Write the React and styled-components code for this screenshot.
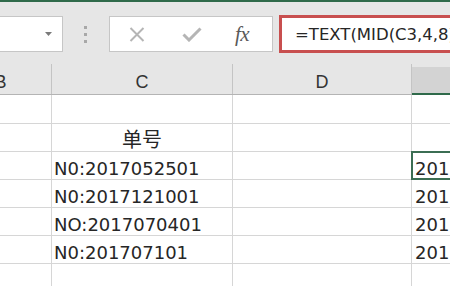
import styled, {createGlobalStyle} from 'styled-components'

const GlobalStyle = createGlobalStyle`
	html, body {
		margin: 0;
		padding: 0;
		background: #fff;
	}
`

const columns = [
	{key: 'B', width: 102},
	{key: 'C', width: 181},
	{key: 'D', width: 179},
	{key: 'E', width: 120, selected: true},
]

const rows = [
	{c: '', e: ''},
	{c: '单号', e: '', title: true},
	{c: 'N0:2017052501', e: '2017-05-25', active: true},
	{c: 'N0:2017121001', e: '2017-12-10'},
	{c: 'NO:2017070401', e: '2017-07-04'},
	{c: 'N0:201707101', e: '2017-07-10'},
	{c: '', e: ''},
]

const App = () => {
	return (
		<Screen>
			<GlobalStyle />
			<TopStrip />

			<FormulaBar>
				<NameBox>
					<svg width="7" height="4" viewBox="0 0 7 4">
						<path d="M0 0h7L3.5 4z" fill="#7a7a7a" />
					</svg>
				</NameBox>

				<Grip>
					<span />
					<span />
					<span />
				</Grip>

				<Buttons>
					<IconSlot $w={18}>
						<svg width="16" height="15" viewBox="0 0 16 15">
							<path d="M1.5 1l13 13M14.5 1l-13 13" stroke="#b5b5b5" strokeWidth="2" fill="none" />
						</svg>
					</IconSlot>
					<IconSlot $w={20} $ml={36}>
						<svg width="20" height="15" viewBox="0 0 20 15">
							<path d="M1.5 7.5l5.5 5.5L18.5 1.5" stroke="#b5b5b5" strokeWidth="3" fill="none" />
						</svg>
					</IconSlot>
					<Fx>fx</Fx>
				</Buttons>

				<FormulaInput>=TEXT(MID(C3,4,8),"0000-00-00")</FormulaInput>
			</FormulaBar>

			<Sheet>
				<HeaderRow>
					{columns.map(col => (
						<HeaderCell key={col.key} $w={col.width} $selected={col.selected}>
							{col.selected ? '' : col.key}
						</HeaderCell>
					))}
				</HeaderRow>

				{rows.map((row, i) => (
					<Row key={i} $first={i === 0}>
						<Cell $w={102} />
						<Cell $w={181} $center={row.title}>
							{row.title ? <Title>{row.c}</Title> : row.c}
						</Cell>
						<Cell $w={179} />
						<Cell $w={120} $pad={3} $active={row.active}>{row.e}</Cell>
					</Row>
				))}
			</Sheet>
		</Screen>
	)
}

export default App

const Screen = styled.div`
	width: 450px;
	height: 286px;
	overflow: hidden;
	background: #e6e6e6;
	display: flex;
	flex-direction: column;
`

const TopStrip = styled.div`
	height: 2px;
	background: #2f6a4a;
	flex-shrink: 0;
`

const FormulaBar = styled.div`
	display: flex;
	align-items: center;
	height: 38px;
	margin-top: 13px;
	flex-shrink: 0;
`

const NameBox = styled.div`
	width: 63px;
	height: 36px;
	box-sizing: border-box;
	background: #fff;
	border: 1px solid #c6c6c6;
	border-left: none;
	display: flex;
	align-items: center;
	justify-content: flex-end;
	padding-right: 10px;
`

const Grip = styled.div`
	margin-left: 21px;
	width: 3px;
	display: flex;
	flex-direction: column;
	gap: 4px;

	span{
		display: block;
		width: 3px;
		height: 3px;
		background: #a8a8a8;
	}
`

const Buttons = styled.div`
	margin-left: 22px;
	width: 164px;
	height: 36px;
	box-sizing: border-box;
	background: #fff;
	border: 1px solid #c6c6c6;
	display: flex;
	align-items: center;
	padding-left: 18px;
`

const IconSlot = styled.div`
	width: ${p => p.$w}px;
	margin-left: ${p => p.$ml || 0}px;
	display: flex;
	justify-content: center;
	align-items: center;
`

const Fx = styled.span`
	margin-left: 33px;
	font-family: "Liberation Serif", "DejaVu Serif", serif;
	font-style: italic;
	font-size: 21px;
	color: #5a5a5a;
	letter-spacing: -0.5px;
	line-height: 1;
`

const FormulaInput = styled.div`
	margin-left: 6px;
	flex: 1;
	min-width: 0;
	height: 38px;
	box-sizing: border-box;
	background: #fff;
	border: 3px solid #c84f4f;
	border-right: none;
	padding-left: 13px;
	display: flex;
	align-items: center;
	white-space: nowrap;
	overflow: hidden;
	font-family: "DejaVu Sans", sans-serif;
	font-size: 16.5px;
	color: #262626;
`

const Sheet = styled.div`
	margin-top: 11px;
	margin-left: -50px;
	background: #fff;
	flex: 1;
`

const HeaderRow = styled.div`
	display: flex;
	height: 31px;
	background: #e6e6e6;
	border-bottom: 1px solid #b4b4b4;
	box-sizing: border-box;
`

const HeaderCell = styled.div`
	flex: 0 0 ${p => p.$w}px;
	box-sizing: border-box;
	border-right: 1px solid #c4c4c4;
	display: flex;
	align-items: flex-end;
	justify-content: center;
	padding-bottom: 3px;
	margin-top: ${p => p.$selected ? '3px' : '0'};
	background: ${p => p.$selected ? '#d3d3d3' : 'transparent'};
	border-bottom: ${p => p.$selected ? '2px solid #2f6a4a' : 'none'};
	margin-bottom: ${p => p.$selected ? '-1px' : '0'};
	font-family: "Liberation Sans", Arial, sans-serif;
	font-size: 18px;
	line-height: 1;
	color: #333;
`

const Row = styled.div`
	display: flex;
	height: ${p => p.$first ? 29 : 28}px;
	border-bottom: 1px solid #d6d6d6;
	box-sizing: border-box;
`

const Cell = styled.div`
	position: relative;
	flex: 0 0 ${p => p.$w}px;
	box-sizing: border-box;
	border-right: 1px solid #d6d6d6;
	display: flex;
	align-items: flex-end;
	justify-content: ${p => p.$center ? 'center' : 'flex-start'};
	padding: 0 0 1px ${p => p.$pad || 2}px;
	white-space: nowrap;
	overflow: visible;
	font-family: "DejaVu Sans", "Noto Sans CJK SC", sans-serif;
	font-size: 18px;
	line-height: 1;
	color: #262626;

	${p => p.$active && `
		&::after{
			content: '';
			position: absolute;
			left: -1px;
			top: -1px;
			right: 0;
			bottom: -1px;
			border: 2px solid #3b6e53;
			pointer-events: none;
		}
	`}
`

const Title = styled.span`
	font-family: "Noto Sans CJK SC", sans-serif;
	font-size: 20px;
	line-height: 1;
	margin-bottom: 1px;
	margin-left: -2px;
`
